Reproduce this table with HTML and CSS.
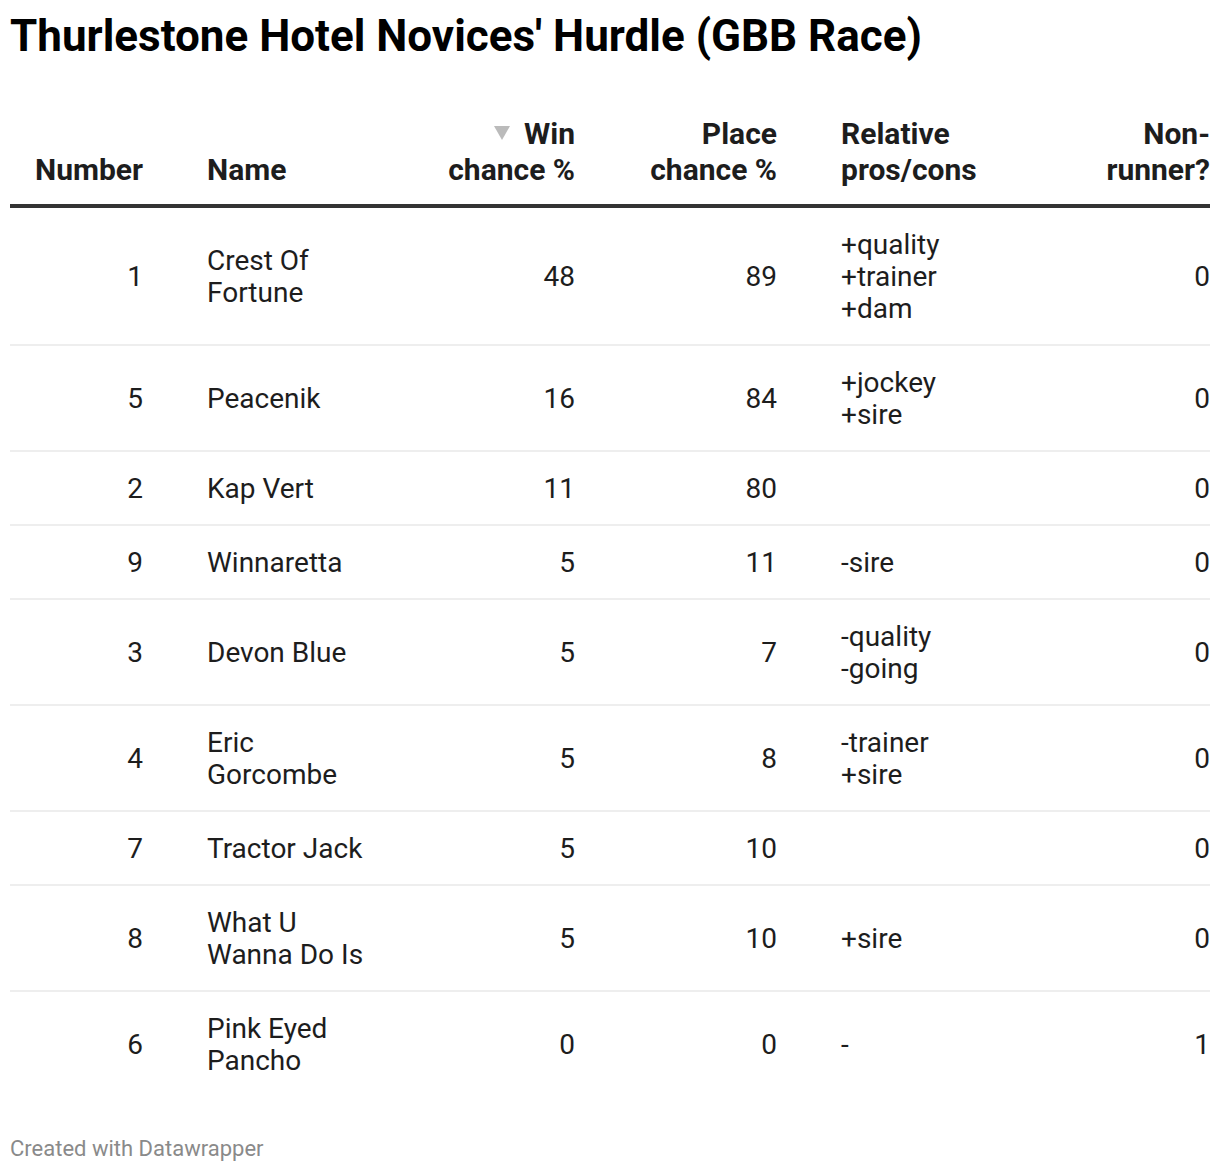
FILE: index.html
```html
<!DOCTYPE html>
<html>
<head>
<meta charset="utf-8">
<link rel="stylesheet" href="styles.css">
</head>
<body>
<div class="chart">
  <h1 class="title">Thurlestone Hotel Novices' Hurdle (GBB Race)</h1>
  <table class="tbl">
    <colgroup>
      <col class="c1"><col class="c2"><col class="c3"><col class="c4"><col class="c5"><col class="c6">
    </colgroup>
    <thead>
      <tr>
        <th class="r">Number</th>
        <th class="l">Name</th>
        <th class="r"><span class="sort"></span>Win chance %</th>
        <th class="r">Place chance %</th>
        <th class="l">Relative pros/cons</th>
        <th class="r">Non-runner?</th>
      </tr>
    </thead>
    <tbody>
      <tr><td class="r">1</td><td class="l">Crest Of Fortune</td><td class="r">48</td><td class="r">89</td><td class="l">+quality<br>+trainer<br>+dam</td><td class="r">0</td></tr>
      <tr><td class="r">5</td><td class="l">Peacenik</td><td class="r">16</td><td class="r">84</td><td class="l">+jockey<br>+sire</td><td class="r">0</td></tr>
      <tr><td class="r">2</td><td class="l">Kap Vert</td><td class="r">11</td><td class="r">80</td><td class="l"></td><td class="r">0</td></tr>
      <tr><td class="r">9</td><td class="l">Winnaretta</td><td class="r">5</td><td class="r">11</td><td class="l">-sire</td><td class="r">0</td></tr>
      <tr><td class="r">3</td><td class="l">Devon Blue</td><td class="r">5</td><td class="r">7</td><td class="l">-quality<br>-going</td><td class="r">0</td></tr>
      <tr><td class="r">4</td><td class="l">Eric Gorcombe</td><td class="r">5</td><td class="r">8</td><td class="l">-trainer<br>+sire</td><td class="r">0</td></tr>
      <tr><td class="r">7</td><td class="l">Tractor Jack</td><td class="r">5</td><td class="r">10</td><td class="l"></td><td class="r">0</td></tr>
      <tr><td class="r">8</td><td class="l">What U Wanna Do Is</td><td class="r">5</td><td class="r">10</td><td class="l">+sire</td><td class="r">0</td></tr>
      <tr><td class="r">6</td><td class="l">Pink Eyed Pancho</td><td class="r">0</td><td class="r">0</td><td class="l">-</td><td class="r">1</td></tr>
    </tbody>
  </table>
  <div class="footer">Created with Datawrapper</div>
</div>
</body>
</html>
```

FILE: styles.css
```css
html, body {
  margin: 0;
  padding: 0;
  background: #ffffff;
}
body {
  font-family: Roboto, "Liberation Sans", Arial, sans-serif;
  color: #1d1d1d;
}
.chart {
  padding: 0 10px;
}
.title {
  margin: 10px 0 0;
  font-size: 44px;
  line-height: 52px;
  font-weight: 700;
  color: #000;
}
.tbl {
  margin-top: 34px;
  width: 1200px;
  border-collapse: collapse;
  table-layout: fixed;
  font-size: 28px;
}
.c1 { width: 165px; }
.c2 { width: 230px; }
.c3 { width: 202px; }
.c4 { width: 202px; }
.c5 { width: 251px; }
.c6 { width: 150px; }
.tbl th {
  font-size: 30px;
  font-weight: 700;
  line-height: 36px;
  padding: 20px 32px 16px;
  vertical-align: bottom;
  border-bottom: 4px solid #333333;
  color: #1d1d1d;
}
.tbl td {
  line-height: 32px;
  padding: 21px 32px 19px;
  vertical-align: middle;
  border-bottom: 2px solid #eeeeee;
}
.tbl tbody tr:last-child td {
  border-bottom: none;
}
.tbl th:first-child, .tbl td:first-child { padding-left: 0; }
.tbl th:last-child, .tbl td:last-child { padding-right: 0; }
.r { text-align: right; }
.l { text-align: left; }
.sort {
  display: inline-block;
  width: 0;
  height: 0;
  border-left: 8px solid transparent;
  border-right: 8px solid transparent;
  border-top: 14px solid #bbbbbb;
  margin-right: 14px;
  vertical-align: 4px;
}
.footer {
  margin-top: 39px;
  font-size: 22px;
  line-height: 28px;
  color: #8a8a8a;
}
```
